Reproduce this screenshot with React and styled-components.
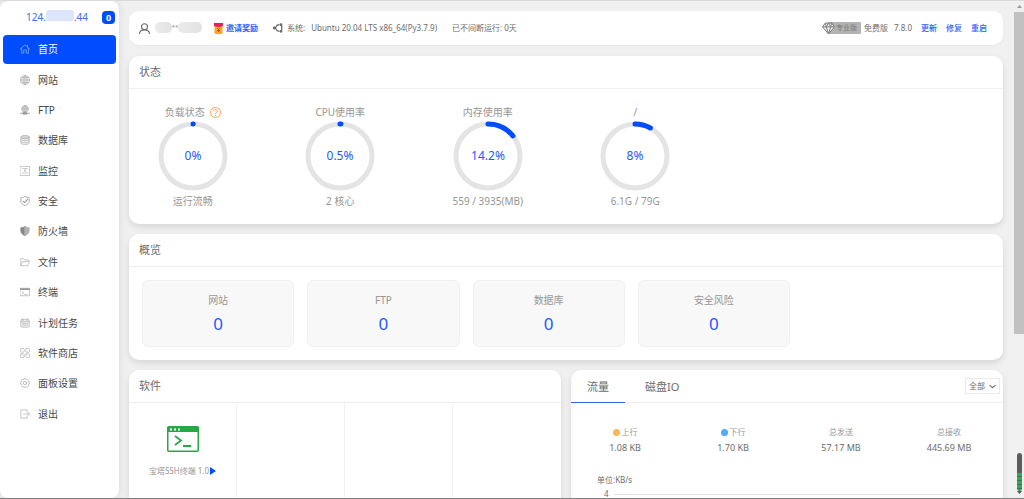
import React from "react";
import styled, { createGlobalStyle } from "styled-components";

const GlobalStyle = createGlobalStyle`
  * { box-sizing: border-box; }
  body {
    margin: 0;
    background: #f0f0f0;
    color: #6c6c6c;
    font: 10px/16px "Noto Sans", "Noto Sans CJK SC", sans-serif;
  }
  button, select { font: inherit; color: inherit; }
  a { color: inherit; text-decoration: none; }
  svg { display: block; flex: none; }
`;

const Shell = styled.div`
  display: flex;
  height: 100vh;
  overflow: hidden;
  border-top: 1px solid #dadada;
  border-bottom: 1px solid #808080;
`;

/* ---------- Sidebar ---------- */
const Sidebar = styled.aside`
  flex: none;
  width: 119px;
  background: #fff;
  border-radius: 8px;
  box-shadow: 0 0 8px rgba(0, 0, 0, 0.1);
`;

const ServerRow = styled.div`
  display: flex;
  align-items: center;
  justify-content: space-between;
  height: 34px;
  padding: 0 4px 2px 26px;
  color: #3c6cf0;
`;

const ServerIp = styled.a`
  display: flex;
  align-items: center;
`;

const IpMask = styled.span`
  width: 28px;
  height: 11px;
  margin-top: -3px;
  border-radius: 3px;
  background: #dbe6fd;
`;

const Count = styled.span`
  width: 13px;
  height: 13px;
  border-radius: 4px;
  background: #004dff;
  color: #fff;
  font-size: 9px;
  font-weight: 700;
  line-height: 13px;
  text-align: center;
`;

const Menu = styled.nav`
  display: grid;
  grid-template-rows: repeat(13, 1fr);
  gap: 1px;
  height: 394px;
  padding: 0 3px;
`;

const MenuItem = styled.a`
  display: flex;
  align-items: center;
  gap: 8px;
  padding: 0 0 1px 17px;
  border-radius: 4px;
  background: ${(p) => (p.$active ? "#004dff" : "transparent")};
  color: ${(p) => (p.$active ? "#fff" : "#484848")};
  svg { color: ${(p) => (p.$active ? "#8fb0ff" : "#b2b2b2")}; }
`;

/* ---------- Main column ---------- */
const Main = styled.main`
  flex: 1;
  min-width: 0;
  padding: 10px 10px 0;
`;

const Panel = styled.section`
  background: #fff;
  border-radius: 10px;
  box-shadow: 0 3px 6px rgba(0, 0, 0, 0.11);
  margin-bottom: 10px;
`;

const TopBar = styled.header`
  display: flex;
  align-items: center;
  justify-content: space-between;
  height: 34px;
  margin-bottom: 11px;
  padding: 0 16px 0 10px;
  background: #fff;
  border-radius: 10px;
  box-shadow: 0 1px 3px rgba(0, 0, 0, 0.04);
  font-size: 8px;
  white-space: nowrap;
`;

const Group = styled.div`
  display: flex;
  align-items: center;
  gap: ${(p) => p.$gap}px;
`;

const UserMask = styled.span`
  display: flex;
  align-items: center;
  justify-content: space-between;
  width: 47px;
  margin-right: -3px;
  padding-bottom: 2px;
  color: #888;
  font-size: 6px;
  line-height: 11px;
`;

const Smudge = styled.span`
  width: ${(p) => p.$w}px;
  height: 11px;
  border-radius: 5px;
  background: linear-gradient(90deg, #ebebeb, #e2e2e2);
`;

const BlueLink = styled.a`
  color: #2b62ff;
  font-weight: ${(p) => (p.$bold ? 700 : 500)};
`;

const Pro = styled.span`
  display: flex;
  align-items: center;
`;

const ProTag = styled.span`
  margin-left: -7px;
  padding: 0 4px 0 8px;
  height: 12px;
  line-height: 12px;
  border-radius: 1px;
  background: #b3b3b3;
  color: #787878;
  font-size: 7px;
`;

const Diamond = styled.svg`
  position: relative;
  z-index: 1;
`;

const PanelHead = styled.div`
  display: flex;
  align-items: center;
  height: 33px;
  padding-left: 10px;
  border-bottom: 1px solid #efefef;
`;

const PanelTitle = styled.h2`
  margin: 0;
  font-size: 11px;
  font-weight: 400;
`;

const Gauges = styled.div`
  display: grid;
  grid-template-columns: repeat(4, 1fr);
  gap: 20px;
  max-width: 570px;
  padding: 15px 0;
`;

const Gauge = styled.div`
  display: flex;
  flex-direction: column;
  align-items: center;
  height: 105px;
  color: #969696;
`;

const GaugeLabel = styled.div`
  display: flex;
  align-items: flex-start;
  gap: 5px;
  height: 19px;
  svg { margin-top: 3px; }
`;

const Ring = styled.svg`
  margin-bottom: 2px;
`;

const Counters = styled.div`
  display: grid;
  grid-template-columns: repeat(4, 1fr);
  gap: 13px;
  max-width: 674px;
  padding: 13px;
`;

const Counter = styled.a`
  display: flex;
  flex-direction: column;
  align-items: center;
  gap: 6px;
  height: 67px;
  padding-top: 11px;
  border: 1px solid #f0f0f0;
  border-radius: 6px;
  background: #f8f8f8;
  color: #969696;
`;

const CounterValue = styled.span`
  color: #1f59ff;
  font-size: 17px;
  line-height: 20px;
`;

const Columns = styled.div`
  display: grid;
  grid-template-columns: 1fr 1fr;
  gap: 10px;
`;

const Apps = styled.div`
  display: grid;
  grid-template-columns: repeat(4, 1fr);
`;

const AppCell = styled.div`
  display: flex;
  flex-direction: column;
  align-items: center;
  gap: 11px;
  height: 108px;
  padding-top: 23px;
  border-right: 1px solid ${(p) => (p.$last ? "transparent" : "#f2f2f2")};
  color: #969696;
  font-size: 8px;
`;

const AppName = styled.span`
  display: flex;
  align-items: center;
  gap: 1px;
`;

const TabBar = styled.div`
  display: flex;
  height: 33px;
  padding-right: 3px;
  border-bottom: 1px solid #efefef;
`;

const Tab = styled.button`
  padding: 2px ${(p) => (p.$active ? 16 : 20)}px 0;
  border: 0;
  box-shadow: ${(p) => (p.$active ? "0 1px 0 #2e66f0" : "none")};
  background: none;
  font-size: 11px;
`;

const SelectBox = styled.label`
  display: flex;
  align-items: center;
  align-self: center;
  margin-left: auto;
  width: 35px;
  height: 16px;
  padding: 0 3px;
  border: 1px solid #ebebeb;
`;

const Select = styled.select`
  appearance: none;
  flex: 1;
  min-width: 0;
  padding: 0;
  border: 0;
  background: transparent;
  font-size: 8px;
`;

const Traffic = styled.dl`
  display: grid;
  grid-template-columns: repeat(4, 1fr);
  margin: 0;
  padding: 21px 0 16px;
  text-align: center;
`;

const TrafficLabel = styled.dt`
  display: flex;
  align-items: center;
  justify-content: center;
  gap: 2px;
  color: #999;
  font-size: 8px;
`;

const Dot = styled.span`
  width: 7px;
  height: 7px;
  border-radius: 50%;
  background: ${(p) => p.$color};
`;

const TrafficValue = styled.dd`
  margin: 0;
  font-size: 9px;
`;

const Chart = styled.div`
  padding: 0 43px 0 26px;
  height: 60px;
  font-size: 8px;
`;

const Axis = styled.div`
  display: flex;
  align-items: center;
  gap: 5px;
  height: 12px;
  padding-left: 7px;
`;

const AxisLine = styled.span`
  flex: 1;
  height: 1px;
  background: #e2e2e2;
`;

/* ---------- Scroll rail ---------- */
const Rail = styled.div`
  flex: none;
  display: flex;
  flex-direction: column;
  align-items: center;
  justify-content: space-between;
  width: 11px;
  padding: 4px 0 4px 1px;
`;

const Thumb = styled.div`
  width: 10px;
  height: 322px;
  margin-top: 4px;
  background: #c1c1c1;
`;

const Meter = styled.div`
  width: 5px;
  height: 38px;
  border-radius: 3px;
  background: repeating-linear-gradient(transparent 0 3px, #4b6b55 3px 4px) 0 20px no-repeat,
    linear-gradient(#5c5c5c 20px, #35a75a 20px);
`;

const RailPart = styled.div`
  display: flex;
  flex-direction: column;
  align-items: center;
`;

/* ---------- Icons ---------- */
const Icon = ({ size = 10, width = 1.8, children }) => (
  <svg width={size} height={size} viewBox="0 0 24 24" fill="none" stroke="currentColor"
    strokeWidth={width} strokeLinecap="round" strokeLinejoin="round" aria-hidden="true">
    {children}
  </svg>
);

const icons = {
  home: <path d="M1 12 12 2l11 10M4 10v12h5v-8h6v8h5V10M18 3v4" />,
  globe: <><circle cx="12" cy="12" r="11" fill="currentColor" fillOpacity=".2" /><path d="M1 12h22M3 6h18M3 18h18M12 1v22M12 1c-7 6-7 16 0 22 7-6 7-16 0-22" /></>,
  ftp: <><circle cx="12" cy="9" r="8" fill="currentColor" fillOpacity=".4" /><path d="M4 9h16M12 1v22M12 1c-5 5-5 11 0 16 5-5 5-11 0-16" /><path d="M1 20h22M8 18h8v4H8z" stroke="#8c8c8c" /></>,
  db: <><ellipse cx="12" cy="5" rx="10" ry="4" fill="currentColor" fillOpacity=".5" /><path d="M2 5v14c0 5 20 5 20 0V5M2 10c0 5 20 5 20 0M2 15c0 5 20 5 20 0" fill="currentColor" fillOpacity=".2" /></>,
  monitor: <><rect x="1" y="1" width="22" height="22" /><path d="M7 6h10M10 10h4M12 10v4M5 18l4-3 3 3 3-3 4 3" /></>,
  shield: <><path d="M12 1c3 2 6 3 10 3v8c0 5-4 9-10 11C6 21 2 17 2 12V4c4 0 7-1 10-3z" stroke="#999" /><path d="m7 12 4 4 7-8" stroke="#999" strokeWidth="2.500" /></>,
  firewall: <><path d="M12 1C9 3 6 4 2 4v8c0 5 4 9 10 11z" fill="#888" stroke="#888" /><path d="M12 1c3 2 6 3 10 3v8c0 5-4 9-10 11z" fill="currentColor" /></>,
  folder: <path d="M2 20V4h7l2 3h10v4M2 20l4-9h17l-4 9z" />,
  terminal: <><rect x="1" y="3" width="22" height="18" /><path d="M1 5h22" strokeWidth="4" stroke="#999" /><path d="m5 11 4 3-4 3M11 18h6" /></>,
  calendar: <><rect x="2" y="4" width="20" height="18" rx="2" fill="currentColor" fillOpacity=".15" /><path d="M2 9h20M7 1v5M17 1v5M6 13h12M6 17h12" /></>,
  store: <><rect x="1" y="1" width="9" height="9" rx="2" /><rect x="14" y="1" width="9" height="9" rx="2" /><rect x="1" y="14" width="9" height="9" rx="2" /><rect x="14" y="14" width="9" height="9" rx="2" /></>,
  gear: <><path d="m9 4 1-3h4l1 3 3-1 3 3-1 3 3 1v4l-3 1 1 3-3 3-3-1-1 3h-4l-1-3-3 1-3-3 1-3-3-1v-4l3-1-1-3 3-3z" /><circle cx="12" cy="12" r="4" /></>,
  exit: <path d="M17 7V2H2v20h15v-5M9 12h14M19 8l4 4-4 4" />,
};

const menu = [
  ["home", "首页"], ["globe", "网站"], ["ftp", "FTP"], ["db", "数据库"], ["monitor", "监控"],
  ["shield", "安全"], ["firewall", "防火墙"], ["folder", "文件"], ["terminal", "终端"],
  ["calendar", "计划任务"], ["store", "软件商店"], ["gear", "面板设置"], ["exit", "退出"],
];

const gauges = [
  { label: "负载状态", value: 0, text: "0%", note: "运行流畅", help: true },
  { label: "CPU使用率", value: 0.5, text: "0.5%", note: "2 核心" },
  { label: "内存使用率", value: 14.2, text: "14.2%", note: "559 / 3935(MB)" },
  { label: "/", value: 8, text: "8%", note: "6.1G / 79G" },
];

const traffic = [
  ["上行", "1.08 KB", "#f7b851"], ["下行", "1.70 KB", "#52a9ff"],
  ["总发送", "57.17 MB"], ["总接收", "445.69 MB"],
];

const RingChart = ({ value, text }) => (
  <Ring width="70" height="70" viewBox="0 0 70 70">
    <circle cx="35" cy="35" r="32" fill="none" stroke="#e4e4e4" strokeWidth="5" />
    <circle cx="35" cy="35" r="32" fill="none" stroke="#004dff" strokeWidth="5" strokeLinecap="round"
      pathLength="100" strokeDasharray={`${Math.max(value, 0.1)} 100`} transform="rotate(-90 35 35)" />
    <text x="35" y="39" textAnchor="middle" fontSize="12" fill="#1f59ff">{text}</text>
  </Ring>
);

export default function App() {
  return (
    <>
      <GlobalStyle />
      <Shell>
        <Sidebar>
          <ServerRow>
            <ServerIp href="#">124.<IpMask />.44</ServerIp>
            <Count>0</Count>
          </ServerRow>
          <Menu>
            {menu.map(([icon, label], i) => (
              <MenuItem href="#" key={icon} $active={i === 0}>
                <Icon>{icons[icon]}</Icon>
                {label}
              </MenuItem>
            ))}
          </Menu>
        </Sidebar>

        <Main>
          <TopBar>
            <Group $gap={15}>
              <Group $gap={5}>
                <Icon size={11} width={2.4}><circle cx="12" cy="8" r="6.5" /><path d="M1 23c1-6 5-8 11-8s10 2 11 8" /></Icon>
                <UserMask><Smudge $w={17} />**<Smudge $w={24} /></UserMask>
              </Group>
              <Group $gap={3}>
                <svg width="9" height="11" viewBox="0 0 9 11" aria-hidden="true">
                  <rect x="0.5" y="1" width="8" height="10" rx="1" fill="#f9a825" />
                  <path d="M0 0h9v3Q4.500 5 0 3z" fill="#e91e63" />
                  <path d="M3 5l1.500 1.500L6 5M4.500 6v3M3 7.500h3" stroke="#e0403a" fill="none" />
                </svg>
                <BlueLink href="#" $bold>邀请奖励</BlueLink>
              </Group>
              <Group $gap={6}>
                <Group $gap={4}>
                  <svg width="10" height="10" viewBox="0 0 24 24" fill="none" stroke="#666" strokeWidth="3" aria-hidden="true">
                    <path d="M7 9a9 9 0 0 1 8-5M21 6v12M15 20a9 9 0 0 1-8-5" />
                    <circle cx="3" cy="12" r="2" /><circle cx="19" cy="4" r="2" /><circle cx="19" cy="20" r="2" />
                    <path d="M7 9a8 8 0 0 0 0 6" />
                  </svg>
                  <span>系统:</span>
                </Group>
                <span>Ubuntu 20.04 LTS x86_64(Py3.7.9)</span>
              </Group>
              <span>已不间断运行: 0天</span>
            </Group>
            <Group $gap={9}>
              <Group $gap={6}>
                <Group $gap={3}>
                  <Pro>
                    <Diamond width="13" height="13" viewBox="0 0 24 24" fill="#f4f4f4" stroke="#777" strokeWidth="1.800" strokeLinejoin="round" aria-hidden="true">
                      <path d="M6 2h12l5 7-11 13L1 9z" />
                      <path d="M1 9h22M8 9l4 13 4-13M6 2l2 7 4-7 4 7 2-7" fill="none" />
                    </Diamond>
                    <ProTag>专业版</ProTag>
                  </Pro>
                  <span>免费版</span>
                </Group>
                <span>7.8.0</span>
              </Group>
              <BlueLink href="#">更新</BlueLink>
              <BlueLink href="#">修复</BlueLink>
              <BlueLink href="#">重启</BlueLink>
            </Group>
          </TopBar>

          <Panel>
            <PanelHead><PanelTitle>状态</PanelTitle></PanelHead>
            <Gauges>
              {gauges.map((g) => (
                <Gauge key={g.label}>
                  <GaugeLabel>
                    {g.label}
                    {g.help && (
                      <svg width="11" height="11" viewBox="0 0 24 24" fill="none" stroke="#f7a04b" strokeWidth="2" aria-hidden="true">
                        <circle cx="12" cy="12" r="11" />
                        <path d="M8 9c0-5 8-5 8 0 0 3-4 3-4 6M12 17v3" />
                      </svg>
                    )}
                  </GaugeLabel>
                  <RingChart value={g.value} text={g.text} />
                  <span>{g.note}</span>
                </Gauge>
              ))}
            </Gauges>
          </Panel>

          <Panel>
            <PanelHead><PanelTitle>概览</PanelTitle></PanelHead>
            <Counters>
              {["网站", "FTP", "数据库", "安全风险"].map((name) => (
                <Counter href="#" key={name}>
                  {name}
                  <CounterValue>0</CounterValue>
                </Counter>
              ))}
            </Counters>
          </Panel>

          <Columns>
            <Panel>
              <PanelHead><PanelTitle>软件</PanelTitle></PanelHead>
              <Apps>
                <AppCell>
                  <svg width="32" height="26" viewBox="0 0 32 26" fill="none" stroke="#28a745" aria-hidden="true">
                    <rect x="0.750" y="0.750" width="30.500" height="24.500" rx="1" strokeWidth="1.500" />
                    <path d="M0 1h32v5H0z" fill="#28a745" stroke="none" />
                    <path d="M3 3.500h2M7 3.500h2M11 3.500h2" stroke="#fff" strokeWidth="2" />
                    <path d="m8 10 6 4.500L8 19M16 20h8" strokeWidth="1.800" />
                  </svg>
                  <AppName>
                    宝塔SSH终端 1.0
                    <svg width="6" height="8" viewBox="0 0 6 8" aria-hidden="true"><path d="M0 0l6 4-6 4z" fill="#004dff" /></svg>
                  </AppName>
                </AppCell>
                <AppCell />
                <AppCell />
                <AppCell $last />
              </Apps>
            </Panel>

            <Panel>
              <TabBar>
                <Tab type="button" $active>流量</Tab>
                <Tab type="button">磁盘IO</Tab>
                <SelectBox>
                  <Select aria-label="网卡"><option>全部</option></Select>
                  <Icon size={7} width={4}><path d="m3 8 9 8 9-8" /></Icon>
                </SelectBox>
              </TabBar>
              <Traffic>
                {traffic.map(([label, value, color]) => (
                  <div key={label}>
                    <TrafficLabel>{color && <Dot $color={color} />}{label}</TrafficLabel>
                    <TrafficValue>{value}</TrafficValue>
                  </div>
                ))}
              </Traffic>
              <Chart>
                单位:KB/s
                <Axis>4<AxisLine /></Axis>
              </Chart>
            </Panel>
          </Columns>
        </Main>

        <Rail>
          <RailPart>
            <svg width="5" height="3" viewBox="0 0 5 3" aria-hidden="true"><path d="M0 3l2.500-3L5 3z" fill="#999" /></svg>
            <Thumb />
          </RailPart>
          <RailPart>
            <Meter />
            <svg width="5" height="3" viewBox="0 0 5 3" aria-hidden="true"><path d="M0 0l2.500 3L5 0z" fill="#555" /></svg>
          </RailPart>
        </Rail>
      </Shell>
    </>
  );
}
